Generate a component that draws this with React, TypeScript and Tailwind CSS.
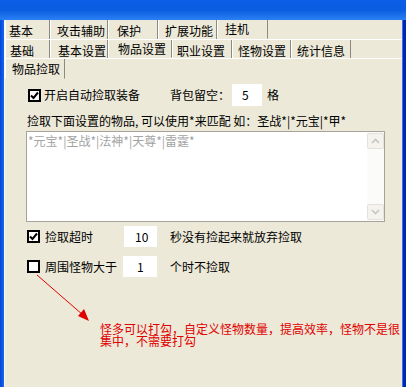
const font = { fontFamily: '"Noto Sans CJK SC", "Liberation Sans", sans-serif' };

type TabProps = { label: string; w: number; pl: number; selected?: boolean };

const Tab = ({ label, w, pl, selected }: TabProps) => (
  <div
    className={
      'flex h-full shrink-0 items-center border-l border-r border-l-white border-r-[#8c8a80] text-[12px] leading-none text-black ' +
      (selected ? 'border-b border-b-[#ece9d8] pt-0' : 'pt-[3px]')
    }
    style={{ width: w, paddingLeft: pl }}
  >
    {label}
  </div>
);

const CheckBox = ({ checked }: { checked?: boolean }) => (
  <div className="flex h-[13px] w-[13px] shrink-0 items-center justify-center border-2 border-black bg-white">
    {checked && (
      <svg width="9" height="9" viewBox="0 0 9 9">
        <path d="M1 4.5 L3.5 7 L8 1.5" stroke="black" strokeWidth="2" fill="none" />
      </svg>
    )}
  </div>
);

const Chevron = ({ up }: { up?: boolean }) => (
  <svg width="9" height="6" viewBox="0 0 9 6">
    <path d={up ? 'M1 5 L4.5 1.5 L8 5' : 'M1 1 L4.5 4.5 L8 1'} stroke="#c9c7bd" strokeWidth="1.6" fill="none" />
  </svg>
);

export default function App() {
  return (
    <div className="relative flex h-[387px] w-[406px] flex-col overflow-hidden bg-[#ece9d8]" style={font}>
      {/* title bar strip */}
      <div className="h-[20px] shrink-0 bg-gradient-to-b from-[#0a5ee6] via-[#0a5ce0] to-[#2a80f4]" />

      <div className="flex flex-1">
        <div className="w-[4px] shrink-0 bg-gradient-to-r from-[#0046d6] to-[#1a66ee]" />
        <div className="w-[1px] shrink-0 bg-[#f7f6f0]" />

        <div className="flex flex-1 flex-col">
          {/* tab row 1 */}
          <div className="flex h-[20px] border-b border-white">
            <Tab label="基本" w={45} pl={3} />
            <Tab label="攻击辅助" w={58} pl={6} />
            <Tab label="保护" w={50} pl={8} />
            <Tab label="扩展功能" w={59} pl={6} />
            <Tab label="挂机" w={51} pl={7} selected />
          </div>
          {/* tab row 2 */}
          <div className="flex h-[19px] border-b border-white">
            <Tab label="基础" w={45} pl={4} />
            <Tab label="基本设置" w={58} pl={7} />
            <Tab label="物品设置" w={64} pl={9} selected />
            <Tab label="职业设置" w={60} pl={4} />
            <Tab label="怪物设置" w={59} pl={5} />
            <Tab label="统计信息" w={60} pl={5} />
          </div>
          {/* tab row 3 */}
          <div className="flex h-[20px]">
            <Tab label="物品捡取" w={60} pl={6} selected />
          </div>

          {/* page content */}
          <div className="flex flex-col text-[12px] leading-none text-black">
            <div className="mt-[5px] flex h-[22px] items-center pl-[23px]">
              <CheckBox checked />
              <span className="ml-[3px]">开启自动捡取装备</span>
              <span className="ml-[30px]">背包留空：</span>
              <div className="ml-[2px] flex h-[22px] w-[30px] items-center bg-white pl-[10px]">5</div>
              <span className="ml-[5px]">格</span>
            </div>

            <div className="mt-[8px] flex h-[14px] items-center pl-[22px]">
              捡取下面设置的物品, 可以使用*来匹配 如：圣战*|*元宝|*甲*
            </div>

            <div className="ml-[21px] mt-[3px] flex h-[91px] w-[359px] border border-[#a5a39a] bg-white">
              <div className="flex-1 pl-[1px] pt-[3px] text-[#a3a3a3]">*元宝*|圣战*|法神*|天尊*|雷霆*</div>
              <div className="flex w-[17px] flex-col justify-between bg-[#fbfbf9] py-[1px]">
                <div className="flex h-[16px] items-center justify-center rounded-[2px] border border-[#e4e2da] bg-[#f4f3ee]">
                  <Chevron up />
                </div>
                <div className="flex h-[16px] items-center justify-center rounded-[2px] border border-[#e4e2da] bg-[#f4f3ee]">
                  <Chevron />
                </div>
              </div>
            </div>

            <div className="mt-[4px] flex h-[21px] items-center pl-[22px]">
              <CheckBox checked />
              <span className="ml-[5px]">捡取超时</span>
              <div className="ml-[31px] flex h-[21px] w-[33px] items-center bg-white pl-[11px]">10</div>
              <span className="ml-[13px]">秒没有捡起来就放弃捡取</span>
            </div>

            <div className="mt-[9px] flex h-[21px] items-center pl-[22px]">
              <CheckBox />
              <span className="ml-[5px]">周围怪物大于</span>
              <div className="ml-[6px] flex h-[21px] w-[34px] items-center bg-white pl-[14px]">1</div>
              <span className="ml-[13px]">个时不捡取</span>
            </div>

            <p className="ml-[95px] mt-[46px] w-[301px] text-[12px] leading-[12px] text-[#e00000]">
              怪多可以打勾，自定义怪物数量，提高效率，怪物不是很集中，不需要打勾
            </p>
          </div>
        </div>

        <div className="w-[1px] shrink-0 bg-[#3a6fe6]" />
        <div className="w-[3px] shrink-0 bg-[#0026b0]" />
      </div>

      {/* annotation arrow */}
      <svg className="pointer-events-none absolute left-0 top-0" width="406" height="387">
        <line x1="37" y1="275" x2="83" y2="315" stroke="#e00000" strokeWidth="1" />
        <polygon points="89,321 78,316 84,309" fill="#e00000" />
      </svg>
    </div>
  );
}
